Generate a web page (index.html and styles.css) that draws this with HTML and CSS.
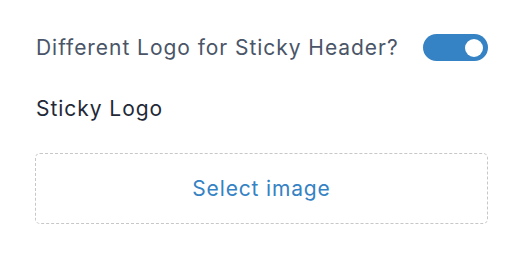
FILE: index.html
```html
<!DOCTYPE html>
<html>
<head>
<meta charset="utf-8">
<link rel="stylesheet" href="styles.css">
</head>
<body>
<div class="panel">
  <div class="row">
    <span class="label">Different Logo for Sticky Header?</span>
    <span class="toggle"><span class="knob"></span></span>
  </div>
  <div class="title">Sticky Logo</div>
  <div class="dropzone">Select image</div>
</div>
</body>
</html>
```
FILE: styles.css
```css
html, body {
  margin: 0;
  padding: 0;
  background: #ffffff;
}
body {
  font-family: Inter, "Noto Sans", sans-serif;
  width: 512px;
  height: 268px;
  overflow: hidden;
}
.panel {
  padding: 34px 24px 0 35px;
  width: 453px;
}
.row {
  display: flex;
  align-items: center;
  justify-content: space-between;
  height: 27px;
}
.label {
  font-size: 21px;
  letter-spacing: 0.95px;
  color: #4a5568;
  padding-left: 1px;
  line-height: 27px;
}
.toggle {
  width: 65px;
  height: 27px;
  border-radius: 14px;
  background: #3582c4;
  display: flex;
  align-items: center;
  justify-content: flex-end;
  padding-right: 5px;
  box-sizing: border-box;
}
.knob {
  width: 18px;
  height: 18px;
  border-radius: 50%;
  background: #ffffff;
}
.title {
  margin-top: 34px;
  padding-left: 1px;
  font-size: 21px;
  letter-spacing: 0.95px;
  line-height: 27px;
  color: #1f2937;
}
.dropzone {
  margin-top: 31px;
  height: 71px;
  box-sizing: border-box;
  border: 1px dashed #c7c7c7;
  border-radius: 5px;
  display: flex;
  align-items: center;
  justify-content: center;
  font-size: 21px;
  letter-spacing: 0.85px;
  color: #3582c4;
}
```
